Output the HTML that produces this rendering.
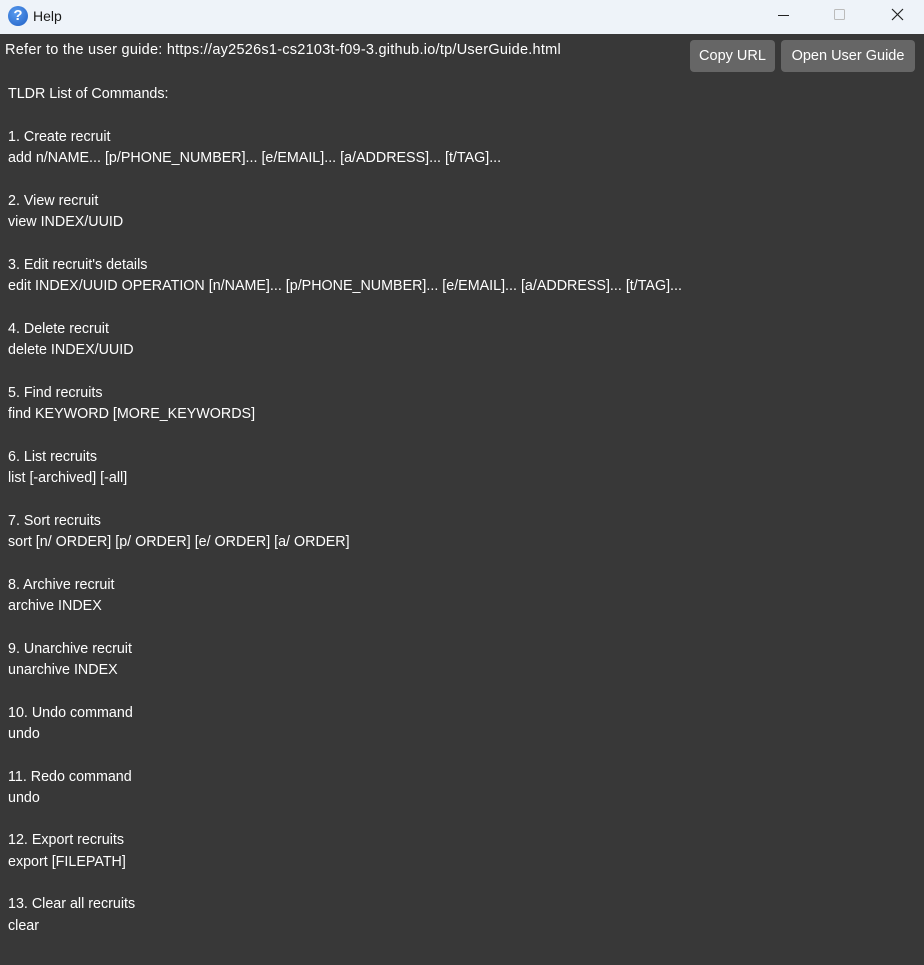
<!DOCTYPE html>
<html><head><meta charset="utf-8"><style>
html,body{margin:0;padding:0;width:924px;height:965px;overflow:hidden;background:#383838;font-family:"Liberation Sans",sans-serif;}
.title{position:absolute;left:0;top:0;width:924px;height:34px;background:#eef3f9;color:#1a1a1a;font-size:14px;}
.title .t{position:absolute;left:33px;top:8px;}
.icon{position:absolute;left:8px;top:6px;width:20px;height:20px;border-radius:50%;background:radial-gradient(circle at 40% 35%,#5a9cf0,#1f5fc4);color:#fff;font-weight:bold;font-size:15px;text-align:center;line-height:20px;}
.ctl{position:absolute;top:0;height:34px;}
.url{position:absolute;left:5px;top:42px;color:#fff;font-size:14.5px;letter-spacing:0.25px;}
.btn{position:absolute;top:40px;height:32px;background:#666;border-radius:4px;color:#fff;font-size:14.5px;line-height:32px;text-align:center;}
.list{position:absolute;left:8px;top:84px;color:#fff;font-size:14.3px;line-height:21.33px;white-space:pre;}
</style></head><body>
<div class="title"><div class="icon">?</div><div class="t">Help</div>
<svg class="ctl" style="left:770px" width="30" height="34"><line x1="8" y1="15.5" x2="19" y2="15.5" stroke="#222" stroke-width="1"/></svg>
<svg class="ctl" style="left:825px" width="30" height="34"><rect x="9.5" y="9.5" width="10" height="10" rx="1" fill="none" stroke="#bbb"/></svg>
<svg class="ctl" style="left:883px" width="30" height="34"><path d="M9 9L20 20M20 9L9 20" stroke="#222" stroke-width="1.2"/></svg>
</div>
<div class="url">Refer to the user guide: https://ay2526s1-cs2103t-f09-3.github.io/tp/UserGuide.html</div>
<div class="btn" style="left:690px;width:85px">Copy URL</div>
<div class="btn" style="left:781px;width:134px">Open User Guide</div>
<div class="list">TLDR List of Commands:

1. Create recruit
add n/NAME... [p/PHONE_NUMBER]... [e/EMAIL]... [a/ADDRESS]... [t/TAG]...

2. View recruit
view INDEX/UUID

3. Edit recruit's details
edit INDEX/UUID OPERATION [n/NAME]... [p/PHONE_NUMBER]... [e/EMAIL]... [a/ADDRESS]... [t/TAG]...

4. Delete recruit
delete INDEX/UUID

5. Find recruits
find KEYWORD [MORE_KEYWORDS]

6. List recruits
list [-archived] [-all]

7. Sort recruits
sort [n/ ORDER] [p/ ORDER] [e/ ORDER] [a/ ORDER]

8. Archive recruit
archive INDEX

9. Unarchive recruit
unarchive INDEX

10. Undo command
undo

11. Redo command
undo

12. Export recruits
export [FILEPATH]

13. Clear all recruits
clear</div>
</body></html>
